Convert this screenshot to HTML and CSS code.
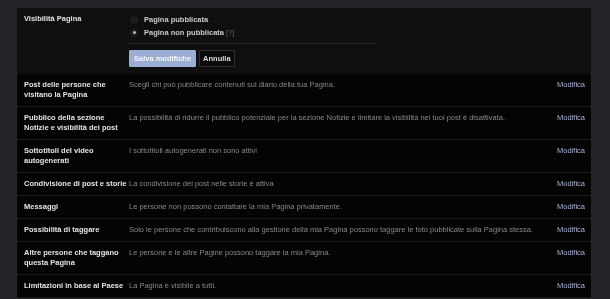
FILE: index.html
```html
<!DOCTYPE html>
<html lang="it">
<head>
    <meta charset="UTF-8">
    <meta name="viewport" content="width=device-width, initial-scale=1.0">
    <title>Impostazioni Pagina</title>
    <link rel="stylesheet" href="styles.css">
</head>
<body>
    <div class="panel">
        <div class="edit-section">
            <div class="row-label">Visibilità Pagina</div>
            <div class="edit-body">
                <label class="radio-line">
                    <span class="radio"></span>
                    <span>Pagina pubblicata</span>
                </label>
                <label class="radio-line">
                    <span class="radio checked"></span>
                    <span>Pagina non pubblicata <span class="help">[?]</span></span>
                </label>
                <div class="edit-divider"></div>
                <div class="edit-actions">
                    <button class="btn btn-primary">Salva modifiche</button>
                    <button class="btn btn-cancel">Annulla</button>
                </div>
            </div>
        </div>

        <div class="setting-row">
            <div class="row-label">Post delle persone che visitano la Pagina</div>
            <div class="row-value">Scegli chi può pubblicare contenuti sul diario della tua Pagina.</div>
            <a class="row-edit">Modifica</a>
        </div>
        <div class="setting-row">
            <div class="row-label">Pubblico della sezione Notizie e visibilità dei post</div>
            <div class="row-value">La possibilità di ridurre il pubblico potenziale per la sezione Notizie e limitare la visibilità nei tuoi post è disattivata.</div>
            <a class="row-edit">Modifica</a>
        </div>
        <div class="setting-row">
            <div class="row-label">Sottotitoli del video autogenerati</div>
            <div class="row-value">I sottotitoli autogenerati non sono attivi</div>
            <a class="row-edit">Modifica</a>
        </div>
        <div class="setting-row">
            <div class="row-label nowrap">Condivisione di post e storie</div>
            <div class="row-value">La condivisione dei post nelle storie è attiva</div>
            <a class="row-edit">Modifica</a>
        </div>
        <div class="setting-row">
            <div class="row-label">Messaggi</div>
            <div class="row-value">Le persone non possono contattare la mia Pagina privatamente.</div>
            <a class="row-edit">Modifica</a>
        </div>
        <div class="setting-row">
            <div class="row-label">Possibilità di taggare</div>
            <div class="row-value">Solo le persone che contribuiscono alla gestione della mia Pagina possono taggare le foto pubblicate sulla Pagina stessa.</div>
            <a class="row-edit">Modifica</a>
        </div>
        <div class="setting-row">
            <div class="row-label">Altre persone che taggano questa Pagina</div>
            <div class="row-value">Le persone e le altre Pagine possono taggare la mia Pagina.</div>
            <a class="row-edit">Modifica</a>
        </div>
        <div class="setting-row">
            <div class="row-label nowrap">Limitazioni in base al Paese</div>
            <div class="row-value">La Pagina è visibile a tutti.</div>
            <a class="row-edit">Modifica</a>
        </div>
    </div>
</body>
</html>
```

FILE: styles.css
```css
:root {
    --page-bg: #232427;
    --panel-bg: #040404;
    --edit-bg: #0f0f0f;
    --line: #1b1b1b;
    --label: #e2e3e6;
    --value: #85878b;
    --link: #a9b3d4;
}

body {
    margin: 0;
    padding: 8px 0 0 17px;
    background: var(--page-bg);
    font-family: 'Liberation Sans', Arial, sans-serif;
    font-size: 7.5px;
    line-height: 10px;
    overflow: hidden;
}

.panel {
    width: 574px;
    background: var(--panel-bg);
}

.edit-section {
    display: grid;
    grid-template-columns: 104px 1fr;
    padding: 6px 7px 7px;
    background: var(--edit-bg);
}

/* small text gets colour fringes otherwise */
.row-label,
.row-value,
.radio-line,
.btn-cancel {
    filter: grayscale(1);
}

.row-edit,
.btn-primary {
    filter: contrast(1.001);
}

.row-label {
    color: var(--label);
    font-weight: bold;
}

.nowrap {
    white-space: nowrap;
}

.edit-body {
    display: flex;
    flex-direction: column;
}

.radio-line {
    display: flex;
    align-items: center;
    gap: 6px;
    height: 13px;
    margin-left: 2px;
    margin-top: -1px;
    color: #c9cacd;
    font-weight: bold;
}

.radio-line + .radio-line {
    margin-top: 0;
}

.radio {
    width: 8px;
    height: 8px;
    border-radius: 50%;
    background: #1c1c1c;
    display: flex;
    align-items: center;
    justify-content: center;
}

.radio.checked::after {
    content: "";
    width: 3px;
    height: 3px;
    border-radius: 50%;
    background: #bdbdbd;
}

.help {
    color: #5d5f63;
    font-weight: normal;
}

.edit-divider {
    width: 249px;
    height: 1px;
    margin: 4px 0 6px;
    background: #2a2a2a;
}

.edit-actions {
    display: flex;
    gap: 3px;
    margin-left: 1px;
}

.btn {
    height: 17px;
    padding: 0 4px;
    font-family: inherit;
    font-size: 7.5px;
    font-weight: bold;
    border-radius: 1px;
    cursor: pointer;
}

.btn-primary {
    background: #9daed5;
    color: #f4f6fb;
    border: 1px solid #9daed5;
}

.btn-cancel {
    background: #0b0b0b;
    color: #d8d9dc;
    border: 1px solid #2e2e2e;
    padding: 0 3px;
}

.setting-row {
    display: grid;
    grid-template-columns: 105px 1fr auto;
    padding: 6px 6px 6px 7px;
    border-bottom: 1px solid var(--line);
}

.row-value {
    color: var(--value);
}

.row-edit {
    color: var(--link);
    padding-left: 10px;
    cursor: pointer;
}
```
